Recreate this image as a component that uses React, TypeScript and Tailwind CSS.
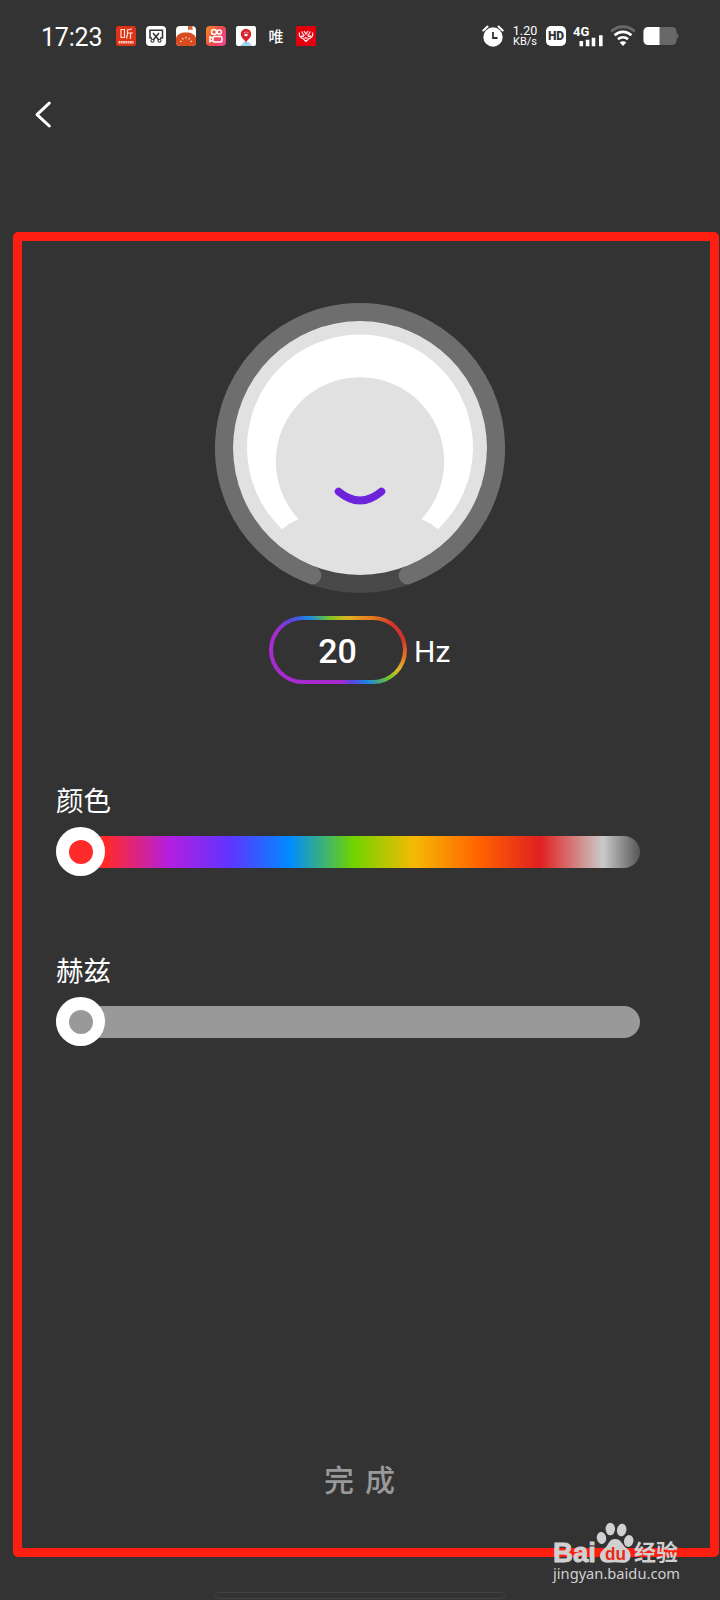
import React from 'react';

const RAINBOW_TRACK =
  'bg-[linear-gradient(to_right,#ff2a2a_28px,#ff2a2a_50px,#b31fe0_113px,#5d35ff_175px,#008cff_234px,#6fd400_297px,#f5b905_358px,#ff6400_422px,#e0201f_484px,#cacaca_547px,#555555_584px)]';

const AppIcons: React.FC = () => (
  <div className="flex items-center gap-[10px]">
    <svg width="20" height="20" viewBox="0 0 20 20">
      <rect width="20" height="20" rx="2.5" fill="#dc3218" />
      <path d="M5 3.500h3.500v8H5zM16 3l-4.500 1v4.500l-1 4M11.500 7H17M14.500 7v6" fill="none" stroke="#ffe0d0" strokeWidth="1.200" />
      <path d="M2.500 16.200h15" stroke="#ffd0c0" strokeWidth="2.400" strokeDasharray="1.800 .5" />
    </svg>
    <svg width="20" height="20" viewBox="0 0 20 20">
      <rect width="20" height="20" rx="4" fill="#fff" />
      <path d="M6 12H4V4.300h12.500V12h-2.500M7 7l5.800 7M13 7l-5.800 7" fill="none" stroke="#333" strokeWidth="1.500" />
      <circle cx="6.500" cy="14.700" r="1.500" fill="none" stroke="#333" strokeWidth="1.100" />
      <circle cx="13.500" cy="14.700" r="1.500" fill="none" stroke="#333" strokeWidth="1.100" />
    </svg>
    <svg width="20" height="20" viewBox="0 0 20 20">
      <rect width="20" height="20" rx="4" fill="#fff" />
      <path d="M12 0h4.500v4.500l-2.200-1.300L12 4.500z" fill="#d8603c" />
      <path d="M0 12C1 8.500 4.500 6.500 10 6.500S19 8.500 20 12v4a4 4 0 0 1-4 4H4a4 4 0 0 1-4-4z" fill="#d94a1d" />
      <path d="M4 15l1.500.7M6.300 12.200l1 1.200M10 10.800v1.800M13.700 12.200l-1 1.200M16 15l-1.500.7" stroke="#ffe5d5" strokeWidth="1.100" />
    </svg>
    <svg width="20" height="20" viewBox="0 0 20 20">
      <defs>
        <linearGradient id="cam" x1="0" y1="0" x2="1" y2="0.600">
          <stop offset="0" stopColor="#f58a20" />
          <stop offset="0.600" stopColor="#ee4a4c" />
          <stop offset="1" stopColor="#ed4488" />
        </linearGradient>
      </defs>
      <rect width="20" height="20" rx="4" fill="url(#cam)" />
      <g fill="none" stroke="#fff" strokeWidth="1.500">
        <circle cx="8" cy="6" r="2.500" />
        <circle cx="13.300" cy="6" r="2.100" />
        <rect x="7" y="10.500" width="9" height="5.500" rx="1.500" />
        <path d="M7 12.300L4 11v4.500l3-1.300" />
      </g>
    </svg>
    <svg width="20" height="20" viewBox="0 0 20 20">
      <rect width="20" height="20" rx="2" fill="#fff" />
      <path d="M4 20l4-4h5l3 4z" fill="#9cd3ef" />
      <path d="M10 16.500C8.500 13.500 4.800 12 4.800 8a5.200 5.200 0 0 1 10.400 0c0 4-3.700 5.500-5.200 8.500z" fill="#d6262b" />
      <ellipse cx="10" cy="9" rx="1.700" ry="1.200" fill="#fff" />
      <path d="M8 6.800h.8M9.700 6h.8M11.500 6.800h.8" stroke="#fff" />
    </svg>
    <span className="flex w-5 justify-center text-[15px] leading-5 font-medium">唯</span>
    <svg width="20" height="20" viewBox="0 0 20 20">
      <rect width="20" height="20" rx="1" fill="#e2000f" />
      <path
        d="M10 15.500L7 12.500M10 15.500l3-3M7 12.500C4 12 2.800 9.500 3.500 6.500M13 12.500c3-.5 4.200-3 3.500-6M5 10l3 .5M15 10l-3 .5M5.500 5.500l3 4.500M14.500 5.500l-3 4.500M8 5l2 3 2-3M8.500 12h3"
        fill="none"
        stroke="#ffdede"
        strokeWidth="1.300"
      />
    </svg>
  </div>
);

const SystemIcons: React.FC = () => (
  <div className="flex items-center">
    <svg width="22" height="22" viewBox="0 0 22 22">
      <circle cx="11" cy="12" r="9.700" fill="#fff" />
      <path d="M1.300 5.500L5.500 1.500M20.700 5.500L16.500 1.500" stroke="#fff" strokeWidth="2" strokeLinecap="round" />
      <path d="M11 7v6h4.500" fill="none" stroke="#333" strokeWidth="1.800" />
    </svg>
    <div className="ml-[7px] flex w-7 flex-col items-center font-[Roboto] text-[11px] leading-[11px]">
      <span className="text-[12.5px]">1.20</span>
      <span>KB/s</span>
    </div>
    <div className="ml-[7px] flex h-5 w-5 items-center justify-center rounded-[5px] bg-white font-[Roboto] text-[12px] font-black text-[#333]">
      HD
    </div>
    <svg className="ml-[7px]" width="31" height="22" viewBox="0 0 31 22">
      <text x="0" y="11" fontFamily="Roboto" fontSize="13" fontWeight="700" fill="#fff">4G</text>
      <path d="M8.300 21.300v-5.300M14.600 21.300v-6.500M20.500 21.300v-8.600M27.800 21.300V10.300" stroke="#fff" strokeWidth="3.600" />
    </svg>
    <svg className="ml-[6px]" width="26" height="22" viewBox="0 0 26 22">
      <path d="M1.200 6.500a17 17 0 0 1 23.600 0" fill="none" stroke="#686868" strokeWidth="2.800" />
      <path d="M4.600 10.300a12 12 0 0 1 16.800 0M8 14.300a7.200 7.200 0 0 1 10 0" fill="none" stroke="#fff" strokeWidth="2.600" />
      <path d="M9.700 17.500a4.700 4.700 0 0 1 6.600 0L13 21z" fill="#fff" />
    </svg>
    <svg className="ml-[7px]" width="36" height="20" viewBox="0 0 36 20">
      <rect x="0.500" y="1" width="33" height="18" rx="4.500" fill="#686868" />
      <path d="M16.500 1H5A4.500 4.500 0 0 0 .5 5.500v9A4.500 4.500 0 0 0 5 19h11.500z" fill="#fff" />
      <path d="M33.500 6.500q2 1 2 3.500t-2 3.500z" fill="#686868" />
    </svg>
  </div>
);

const Dial: React.FC = () => (
  <svg width="290" height="290" viewBox="0 0 290 290">
    <circle cx="145" cy="145" r="145" fill="#484848" />
    <path d="M97.300 272.400A136 136 0 1 1 192.700 272.400" fill="none" stroke="#6e6e6e" strokeWidth="18" strokeLinecap="round" />
    <circle cx="145" cy="145" r="127" fill="#e1e1e1" />
    <path
      d="M67 226.200A113 113 0 1 1 223 226.200Q215.500 220 206.500 216A84.200 84.200 0 1 0 83.500 216Q74.500 220 67 226.200Z"
      fill="#fff"
    />
    <path d="M123.500 188.500Q145 206.500 166.500 188.500" fill="none" stroke="#6d23d9" strokeWidth="7.500" strokeLinecap="round" />
  </svg>
);

interface SliderProps {
  label: string;
  track: string;
  dot: string;
}

const Slider: React.FC<SliderProps> = ({ label, track, dot }) => (
  <div className="w-[584px]">
    <div className="h-[38px] text-[27.5px] leading-[36px]">{label}</div>
    <div className="mt-[8px] flex h-[49px] items-center">
      <div className={`flex h-8 w-full items-center rounded-full ${track}`}>
        <div className="flex h-[49px] w-[49px] shrink-0 items-center justify-center rounded-full bg-white">
          <div className={`h-6 w-6 rounded-full ${dot}`} />
        </div>
      </div>
    </div>
  </div>
);

const Watermark: React.FC = () => (
  <svg className="absolute top-[1518px] left-[548px]" width="140" height="70" viewBox="0 0 140 70">
    <g fill="#d0d0d0">
      <text x="5" y="43.500" fontFamily="Liberation Sans" fontSize="28" fontWeight="700" stroke="#d0d0d0" strokeWidth="0.900" textLength="43" lengthAdjust="spacingAndGlyphs">Bai</text>
      <ellipse cx="53.500" cy="20" rx="4.700" ry="6" transform="rotate(-10 53.500 20)" />
      <ellipse cx="62.300" cy="11" rx="4.700" ry="6.300" />
      <ellipse cx="73.700" cy="12" rx="4.700" ry="6.300" transform="rotate(10 73.700 12)" />
      <ellipse cx="80.700" cy="23" rx="4.700" ry="6" transform="rotate(12 80.700 23)" />
      <path d="M67 21c6 0 7 5 10 8 3 2.500 6 4.500 5.500 9.500-.5 5-4.500 6.500-8.500 6.200-5-.7-9-.7-14 0-4.500.3-8-2-8-6.700 0-4.500 4-6.500 6.500-9.500C61 25.500 61.500 21 67 21z" />
      <text x="86" y="42" fontFamily="Noto Sans CJK SC" fontSize="21.500" fontWeight="700" textLength="44" lengthAdjust="spacingAndGlyphs">经验</text>
      <text x="5" y="61" fontFamily="Noto Sans" fontSize="15" textLength="127" lengthAdjust="spacingAndGlyphs">jingyan.baidu.com</text>
    </g>
    <text x="57" y="41.500" fontFamily="Liberation Sans" fontSize="18" fontWeight="700" fill="#e62a1c" textLength="21" lengthAdjust="spacingAndGlyphs">du</text>
  </svg>
);

const App: React.FC = () => {
  return (
    <div className="relative flex h-[1600px] w-[720px] flex-col overflow-hidden bg-[#333333] font-['Noto_Sans_CJK_SC',sans-serif] text-white">
      <header className="h-[232px] shrink-0">
        <div className="flex h-[72px] items-center justify-between pr-[41px] pl-[41px]">
          <div className="flex items-center">
            <span className="w-[75px] pt-[3px] font-[Roboto] text-[25px] leading-none tracking-[-0.2px]">17:23</span>
            <AppIcons />
          </div>
          <SystemIcons />
        </div>
        <button className="mt-[28px] ml-[34px] block">
          <svg width="20" height="30" viewBox="0 0 20 30">
            <path d="M15.300 3.200L3 14.600L15.300 26" fill="none" stroke="#fff" strokeWidth="3" strokeLinecap="round" strokeLinejoin="round" />
          </svg>
        </button>
      </header>

      <main className="mr-px ml-[13px] flex h-[1325px] shrink-0 flex-col rounded-[5px] border-[9px] border-[#ff1f12] pl-[34px]">
        <div className="mt-[62px] ml-[159px]">
          <Dial />
        </div>
        <div className="mt-[23px] ml-[213px] flex items-center">
          <div className="h-[68px] w-[138px] rounded-full bg-[conic-gradient(#aebd22_0deg,#e0b020_20deg,#e5761e_48deg,#d1332c_66deg,#d1332c_80deg,#e87a22_97deg,#dcb82a_108deg,#6fc52c_119deg,#1c86e4_137deg,#5a44e4_155deg,#a92bd0_175deg,#a92bd0_286deg,#5b44e0_302deg,#1c86e4_317deg,#6fc52c_342deg,#aebd22_360deg)] p-1">
            <div className="flex h-full w-full items-center justify-center rounded-full bg-[#333333] pt-[2px] pr-[1px] font-[Roboto] text-[34px] leading-none font-medium">
              20
            </div>
          </div>
          <span className="ml-[7px] pt-[4px] font-[Roboto] text-[30px] leading-none">Hz</span>
        </div>

        <div className="mt-[97px] flex flex-col gap-[75px]">
          <Slider label="颜色" track={RAINBOW_TRACK} dot="bg-[#ff2a2a]" />
          <Slider label="赫兹" track="bg-[#999999]" dot="bg-[#999999]" />
        </div>

        <button className="mt-auto mb-[48px] ml-[268px] w-fit text-[30px] leading-[44px] font-medium tracking-[11px] text-[#999999]">
          完成
        </button>
      </main>

      <div className="mt-[35px] ml-[215px] h-[7px] w-[290px] shrink-0 rounded-[4px] border border-[#434343]" />
      <Watermark />
    </div>
  );
};

export default App;
